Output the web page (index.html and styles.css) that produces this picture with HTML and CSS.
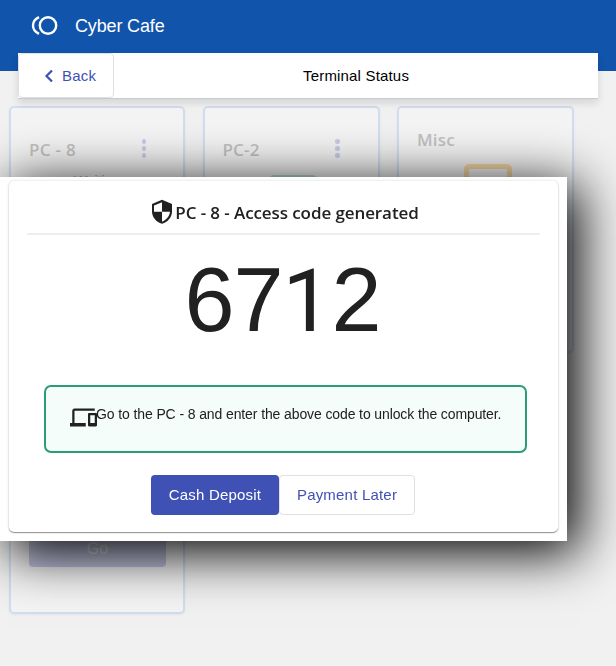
FILE: index.html
```html
<!DOCTYPE html>
<html lang="en">
<head>
<meta charset="utf-8">
<title>Cyber Cafe</title>
<link rel="stylesheet" href="styles.css">
</head>
<body>
<header class="topbar">
  <svg class="logo" viewBox="0 0 28 24"><g fill="none" stroke="#fff" stroke-width="2.4"><circle cx="18" cy="12.5" r="8.2"/><path d="M9 4.2C1 8 1 17 9 20.8"/></g></svg>
  <span class="brand">Cyber Cafe</span>
</header>
<nav class="subbar">
  <button class="btn outline back"><svg class="chevron" viewBox="0 0 10 14"><path d="M8 1.5 2.5 7 8 12.5" fill="none" stroke="currentColor" stroke-width="2.2"/></svg><span>Back</span></button>
  <span class="page-title">Terminal Status</span>
</nav>
<main class="terminals">
  <section class="terminal tall">
    <div class="terminal-head"><h3>PC - 8</h3><span class="dots"><i></i><i></i><i></i></span></div>
    <p class="waiting">Waiting</p>
    <button class="go">Go</button>
  </section>
  <section class="terminal">
    <div class="terminal-head"><h3 class="tight">PC-2</h3><span class="dots"><i></i><i></i><i></i></span></div>
    <div class="screen green"></div>
  </section>
  <section class="terminal misc">
    <div class="terminal-head"><h3 class="tight">Misc</h3></div>
    <div class="screen amber"></div>
  </section>
</main>
<div class="dialog" role="dialog">
  <div class="panel">
    <h2 class="dialog-title">
      <svg class="shield" viewBox="0 0 22 26"><path d="M11 .8 21 5v7.500c0 5.600-4.200 10.600-10 12.300C5.200 23.100 1 18.100 1 12.500V5z" fill="#212121"/><path d="M11 3.200V12.800H3V6.500zM11 12.800h8c-.5 4.500-3.700 8.300-8 9.900z" fill="#fff"/></svg>
      <span>PC - 8 - Access code generated</span>
    </h2>
    <div class="code">67<span class="one">1</span>2</div>
    <div class="notice">
      <svg class="devices" viewBox="0 0 24 18"><path d="M4 2h18V0H4C2.900 0 2 .9 2 2v11H0v3h14v-3H4zM23 4h-6c-.55 0-1 .45-1 1v10c0 .55.45 1 1 1h6c.55 0 1-.45 1-1V5c0-.55-.45-1-1-1zm-1 9h-4V6h4z" fill="#212121"/></svg>
      <span>Go to the PC - 8 and enter the above code to unlock the computer.</span>
    </div>
    <div class="actions">
      <button class="btn primary">Cash Deposit</button><button class="btn outline later">Payment Later</button>
    </div>
  </div>
</div>
</body>
</html>
```
FILE: styles.css
```css
* { box-sizing: border-box; }
body {
  margin: 0;
  height: 666px;
  overflow: hidden;
  background: #f1f1f1;
  font-family: "Liberation Sans", Arial, sans-serif;
}
h2, h3, p { margin: 0; }
button { font-family: inherit; }
.topbar {
  height: 71px;
  padding: 13px 0 0 30px;
  display: flex;
  align-items: flex-start;
  background: #1154ab;
  color: #fff;
}
.logo { width: 28px; height: 24px; margin-right: 17px; }
.brand { font-size: 18px; line-height: 26px; letter-spacing: -.15px; }
.subbar {
  position: relative;
  height: 46px;
  margin: -18px 18px 0;
  display: flex;
  background: #fff;
  border-bottom: 1px solid #c5cbd2;
  box-shadow: 0 4px 8px rgba(0, 0, 0, .12);
}
.btn {
  height: 40px;
  border-radius: 4px;
  font-size: 15px;
  line-height: 38px;
  padding: 0;
  white-space: nowrap;
}
.outline { background: #fff; border: 1px solid #e0e0e0; color: #3f51b5; }
.back {
  width: 96px;
  height: 45px;
  display: flex;
  align-items: center;
  padding: 0 0 0 25px;
  gap: 8px;
  letter-spacing: .25px;
}
.chevron { width: 10px; height: 14px; }
.page-title {
  flex: 1;
  padding-left: 189px;
  font-size: 15px;
  line-height: 45px;
  letter-spacing: .18px;
  color: #000;
}
.terminals {
  display: grid;
  grid-template-columns: 176px 177px 177px;
  column-gap: 17.5px;
  align-items: start;
  padding: 7px 0 0 9px;
}
.terminal {
  height: 247px;
  border: 2px solid #d2def0;
  border-radius: 5px;
  background: #f4f4f4;
  padding: 27px 18px;
  box-shadow: 0 1px 3px rgba(0, 0, 0, .05);
}
.terminal.tall { height: 508px; display: flex; flex-direction: column; }
.terminal-head { display: flex; flex: none; justify-content: space-between; align-items: center; height: 29px; }
.terminal h3 {
  font: 600 17px/32px "Open Sans", "Noto Sans", sans-serif;
  letter-spacing: .3px;
  color: #c2c2c2;
}
.terminal h3.tight { letter-spacing: .15px; }
.dots { display: flex; flex-direction: column; gap: 2.5px; margin: -2px 20px 0 0; }
.tall .dots { margin-right: 19px; }
.dots i { width: 4.5px; height: 4.5px; border-radius: 50%; background: #c7cbe7; }
.waiting { text-align: center; font-size: 14px; line-height: 16px; margin-top: 9px; color: #aaa; }
.go {
  height: 40px;
  margin: 338px -1px 0 0;
  padding: 3px 0 0;
  flex: none;
  border: 0;
  border-radius: 4px;
  background: #c5c9e3;
  color: #e9e9e9;
  font-size: 16px;
}
.screen { width: 48px; height: 60px; margin: 11px 43px 0 auto; border-radius: 5px; }
.green { background: #b9dccf; }
.misc { padding-top: 17px; }
.amber { border: 5px solid #f6d9a8; margin: 10px 42px 0 auto; }
.dialog {
  position: fixed;
  top: 177px;
  left: 0;
  width: 567px;
  height: 364px;
  padding: 4px 9px 9px;
  background: #fff;
  box-shadow: 10px 10px 50px 2px #000;
}
.panel {
  height: 351px;
  padding: 17px 18px;
  border-radius: 5px;
  background: #fff;
  box-shadow: 0 1px 1px rgba(0, 0, 0, .4), 0 0 3px rgba(0, 0, 0, .16);
}
.dialog-title {
  height: 37px;
  display: flex;
  justify-content: center;
  align-items: flex-start;
  gap: 2px;
  padding-left: 3px;
  border-bottom: 2px solid #eee;
  color: #212121;
  font: 600 17px/30px "Open Sans", "Noto Sans", sans-serif;
  letter-spacing: -.09px;
}
.shield { width: 22px; height: 26px; margin-top: 1px; }
.code {
  height: 150px;
  text-align: center;
  font-size: 90px;
  line-height: 130px;
  letter-spacing: -1px;
  padding-right: 2px;
  color: #212121;
}
.one {
  display: inline-block;
  width: 49px;
  line-height: 1;
  font-family: Roboto, sans-serif;
  font-size: 88px;
  letter-spacing: 0;
}
.notice {
  height: 68px;
  margin: 0 13px 0 17px;
  padding: 19px 0 0 24px;
  display: flex;
  align-items: flex-start;
  border: 2px solid #2b9c76;
  border-radius: 7px;
  background: #f4fdfa;
  color: #212121;
  font-size: 14px;
  line-height: 17px;
  letter-spacing: -.11px;
  white-space: nowrap;
}
.devices { width: 27px; height: 21px; margin: 2px -1px 0 0; flex: none; }
.actions { display: flex; justify-content: center; margin-top: 22px; padding-right: 2px; }
.primary { width: 128px; border: 0; padding-left: 1px; background: #3f51b5; color: #fff; letter-spacing: .2px; }
.later { width: 136px; padding-left: 1px; letter-spacing: .2px; }
```
